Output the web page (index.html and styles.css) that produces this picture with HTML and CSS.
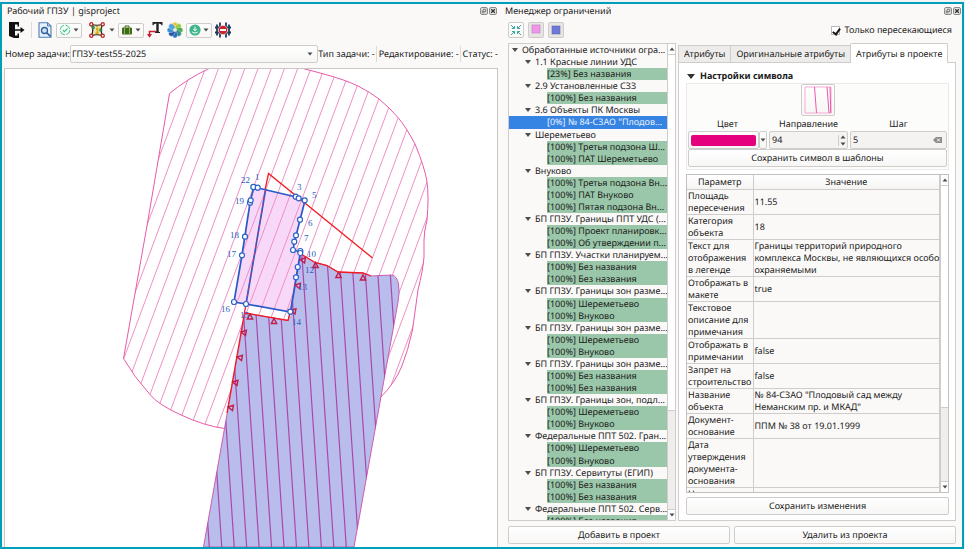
FILE: index.html
```html
<!DOCTYPE html>
<html lang="ru">
<head>
<meta charset="utf-8">
<title>Рабочий ГПЗУ | gisproject</title>
<link rel="stylesheet" href="styles.css">
</head>
<body>
<svg class="defs" aria-hidden="true">
  <symbol id="float" viewBox="0 0 8 8"><rect x=".5" y=".5" width="7" height="7" rx="1.5" fill="#e4e3e2" stroke="#8a8a8a"/><path d="M3.3 2.2h2.5v2.5h-2.5zM2.2 3.5v2.3h2.3" fill="none" stroke="#555" stroke-width=".7"/></symbol>
  <symbol id="close" viewBox="0 0 8 8"><rect x=".5" y=".5" width="7" height="7" rx="1.5" fill="#e4e3e2" stroke="#8a8a8a"/><path d="M2.2 2.2l3.6 3.6M5.8 2.2l-3.6 3.6" stroke="#333" stroke-width="1.3"/></symbol>
  <symbol id="down" viewBox="0 0 6 4"><path d="M.5.5h5L3 3.5z" fill="#4c4c4c"/></symbol>
  <symbol id="up" viewBox="0 0 6 4"><path d="M.5 3.5h5L3 .5z" fill="#4c4c4c"/></symbol>
</svg>
<main class="window">
  <section class="dock work">
    <header class="title"><h1>Рабочий ГПЗУ | gisproject</h1><button aria-label="Открепить"><svg><use href="#float"/></svg></button><button aria-label="Закрыть"><svg><use href="#close"/></svg></button></header>
    <div class="toolbar">
      <button class="tool" aria-label="Выход"><svg viewBox="0 0 16 16"><path d="M0 0h10v4.500H8.500V2.500H6v11h2.500v-2H10V16H5L0 14z" fill="#111"/><path d="M6 7.200h5.500V5L15.500 8l-4 3V8.800H6z" fill="#111"/></svg></button>
      <i class="sep"></i>
      <button class="tool" aria-label="Просмотр"><svg viewBox="0 0 16 16"><path d="M2 .7h8.500L14 4v11.300H2z" fill="#e8f1fb" stroke="#4b7fb5" stroke-width="1.100"/><path d="M10.500.7V4H14" fill="none" stroke="#4b7fb5"/><circle cx="7.500" cy="8.500" r="3" fill="#cfe1f5" stroke="#335f99" stroke-width="1.300"/><path d="M9.600 10.700l4 3.800" stroke="#335f99" stroke-width="1.700"/></svg></button>
      <button class="combo-tool" aria-label="Проверка"><svg viewBox="0 0 12 12"><circle cx="6" cy="6" r="4.800" fill="none" stroke="#3fc98a" stroke-dasharray="6 1.500"/><path d="M3.800 6l1.700 1.700 3-3.200" fill="none" stroke="#3fc98a" stroke-width="1.200"/></svg><svg class="arr"><use href="#down"/></svg></button>
      <button class="tool wide" aria-label="Узлы"><svg viewBox="0 0 16 16"><path d="M2.500 2.500Q8 4 13.500 2.500Q11 8 13.500 13.500Q8 12 2.500 13.500Q5 8 2.500 2.500z" fill="#e9e3ae" stroke="#222" stroke-width="1.200"/><path d="M8 4v1.500M7 7h1.500v4M6.500 11.200h3" stroke="#e4a814" stroke-width="1.800" fill="none"/><g fill="#fff" stroke-width="1.300"><circle cx="2.300" cy="2.300" r="1.600" stroke="#b22"/><circle cx="13.700" cy="2.300" r="1.600" stroke="#b22"/><circle cx="2.300" cy="13.700" r="1.600" stroke="#b22"/><circle cx="13.700" cy="13.700" r="1.600" stroke="#b22"/><circle cx="4.200" cy="5.500" r="1" stroke="#284"/><circle cx="11.800" cy="8" r="1" stroke="#284"/></g></svg><svg class="arr"><use href="#down"/></svg></button>
      <button class="combo-tool" aria-label="Портфель"><svg viewBox="0 0 12 12"><path d="M4 3.500V2h4v1.500" fill="none" stroke="#3e5d15"/><rect x="1" y="3.500" width="10" height="7" rx="1" fill="#3e6b13"/><path d="M3.500 3.500v7M8.500 3.500v7" stroke="#8fb35f"/></svg><svg class="arr"><use href="#down"/></svg></button>
      <button class="tool" aria-label="Подпись"><svg viewBox="0 0 16 16"><path d="M5.500 0h10v3.300h-.9Q14.300 1.400 11.700 1.400v7.800q0 .8 1.300.9v.8H8v-.8q1.300-.1 1.300-.9V1.400Q6.800 1.400 6.400 3.300h-.9z" fill="#222"/><path d="M9 9.500H2.500V14" fill="none" stroke="#c5202c" stroke-width="1.500"/><path d="M0 12h5l-2.500 3.800z" fill="#c5202c"/></svg></button>
      <button class="tool flower" aria-label="Стили"><svg viewBox="0 0 16 16"><g stroke="#fff" stroke-width=".3"><ellipse cx="8" cy="3.500" rx="2.600" ry="3.400" fill="#f0c43a"/><ellipse cx="8" cy="3.500" rx="2.600" ry="3.400" fill="#9cc83e" transform="rotate(45 8 8)"/><ellipse cx="8" cy="3.500" rx="2.600" ry="3.400" fill="#4faa4b" transform="rotate(90 8 8)"/><ellipse cx="8" cy="3.500" rx="2.600" ry="3.400" fill="#2f8f83" transform="rotate(135 8 8)"/><ellipse cx="8" cy="3.500" rx="2.600" ry="3.400" fill="#2c6fc0" transform="rotate(180 8 8)"/><ellipse cx="8" cy="3.500" rx="2.600" ry="3.400" fill="#2756a5" transform="rotate(225 8 8)"/><ellipse cx="8" cy="3.500" rx="2.600" ry="3.400" fill="#3989d4" transform="rotate(270 8 8)"/><ellipse cx="8" cy="3.500" rx="2.600" ry="3.400" fill="#4ea2dd" transform="rotate(315 8 8)"/></g><circle cx="8" cy="8" r="1.800" fill="#e8f1d8"/></svg></button>
      <button class="combo-tool" aria-label="Загрузка"><svg viewBox="0 0 12 12"><circle cx="6" cy="6" r="5.600" fill="#3db58a"/><path d="M6 2.500v4M4.200 5L6 6.800 7.800 5M3.200 7.500q0 1.500 2.800 1.500t2.800-1.500" fill="none" stroke="#fff"/></svg><svg class="arr"><use href="#down"/></svg></button>
      <button class="tool" aria-label="Запрет"><svg viewBox="0 0 16 16"><path d="M2 2.500v11M5 .5v15M11 .5v15M14 2.500v11M0 5.500h16M0 10.500h16" stroke="#1e3c5e" stroke-width="1.800"/><circle cx="8" cy="8" r="4.600" fill="#c9252d" stroke="#f4e6e6" stroke-width=".6"/><rect x="5" y="7" width="6" height="2" fill="#fff"/></svg></button>
    </div>
    <div class="task">
      <label for="task">Номер задачи:</label>
      <span class="select"><select id="task"><option>ГПЗУ-test55-2025</option></select><svg class="arr"><use href="#down"/></svg></span>
      <span>Тип задачи: -</span><i class="sep"></i><span>Редактирование: -</span><i class="sep"></i><span class="status">Статус: -</span>
    </div>
    <div class="map">
      <svg viewBox="5 69 492 478" preserveAspectRatio="xMidYMin slice" role="img" aria-label="Карта участка">
        <defs>
          <path id="zone" d="M169.500 93.500Q187 79 208 69L230 60H270L305 69L322 73.500Q346 80 358 86T379 99Q390 108 398 117.500T415 144Q425 168 427 182T427 220Q424 232 424 240V257Q423 270 418 290L412.500 330Q408 351 401.500 367T380 398L330 410L224.500 428.500Q205 426 181 415T150 394.500Q134 377 123.500 358.500L148 220z"/>
          <path id="area" d="M300.500 254L315 262.500L327 265.500L338 272L363 273L371 276L392 275Q397 276 398.500 284T398 302L354 547H203.500L224.500 428.500L245 313L288 320.500L290.500 311.500L296 277z"/>
          <clipPath id="zclip"><use href="#zone"/></clipPath>
          <clipPath id="aclip"><use href="#area"/></clipPath>
          <path id="tri" d="M-2.700 2.500h5.400L0-2.500z"/>
        </defs>
        <path fill="#f8d8f8" d="M254 187L305 200L293 250L300 253L290 312L234 302z"/>
        <g clip-path="url(#zclip)"><path fill="none" stroke="#ee91c3" d="M178.700 69l-134.300 361m147.500-361l-134.300 361m147.500-361l-134.300 361m147.500-361l-134.300 361m147.500-361l-134.300 361m147.500-361l-134.300 361m147.500-361l-134.300 361m147.500-361l-134.300 361m147.500-361l-134.300 361m147.500-361l-134.300 361m147.500-361l-134.300 361m147.500-361l-134.300 361m147.500-361l-134.300 361m147.500-361l-134.300 361m147.500-361l-134.300 361m147.500-361l-134.300 361m147.500-361l-134.300 361m147.500-361l-134.300 361m147.500-361l-134.300 361m147.500-361l-134.300 361m147.500-361l-134.300 361m147.500-361l-134.300 361m147.500-361l-134.300 361m147.500-361l-134.300 361m147.500-361l-134.300 361m147.500-361l-134.300 361m147.500-361l-134.300 361m147.500-361l-134.300 361"/></g>
        <use href="#zone" fill="none" stroke="#e85aa8"/>
        <use href="#area" fill="#b8bdec" stroke="#cf5cae"/>
        <g clip-path="url(#aclip)"><path fill="none" stroke="#ab47aa" stroke-width="1.200" d="M209.300 547l-20-300m32.450 300l-20-300m32.450 300l-20-300m32.450 300l-20-300m32.450 300l-20-300m32.450 300l-20-300m32.450 300l-20-300m32.450 300l-20-300m32.450 300l-20-300m32.450 300l-20-300m32.450 300l-20-300m32.450 300l-20-300m32.450 300l-20-300m32.450 300l-20-300m32.450 300l-20-300m32.450 300l-20-300m32.450 300l-20-300"/></g>
        <path d="M265 190L268.500 173.500L372.500 258M301 254L315 262.500L327 265.500L338 272L363 273L371 276M227 413L246 304M245 313L288 320.500L290.500 311" fill="none" stroke="#f01c22" stroke-width="1.300"/>
        <path d="M254 187L258 188L296 197L305 200.500L300 220L294.500 242L293 250L300.500 252L298 267L290.500 312L246 304L234 302L242 255L250.500 200zM265.500 190L246 304" fill="none" stroke="#2b58c6" stroke-width="1.700"/>
        <path d="M265.500 190L246 304" stroke="#d03868" stroke-dasharray="3 4"/>
        <g fill="none" stroke="#c21c48" stroke-width="1.400">
          <use href="#tri" x="315.500" y="265"/><use href="#tri" x="338.500" y="275"/><use href="#tri" x="363" y="277.500"/><use href="#tri" x="250" y="316.500"/><use href="#tri" x="274" y="321"/>
          <use href="#tri" transform="translate(302.500 260) rotate(-80)"/><use href="#tri" transform="translate(297.500 285.500) rotate(-80)"/><use href="#tri" transform="translate(293 311) rotate(-80)"/><use href="#tri" transform="translate(243.500 332.500) rotate(-80)"/><use href="#tri" transform="translate(239.500 357.500) rotate(-80)"/><use href="#tri" transform="translate(235 382.500) rotate(-80)"/><use href="#tri" transform="translate(230.500 407.500) rotate(-80)"/>
        </g>
        <g fill="#fff" stroke="#2b62c8" stroke-width="1.200">
          <circle cx="253.500" cy="187" r="2.700"/><circle cx="257.700" cy="187.700" r="2.500"/><circle cx="295.700" cy="196.700" r="2.500"/><circle cx="298.700" cy="198.300" r="2.500"/><circle cx="304.700" cy="200.300" r="2.500"/><circle cx="300" cy="219.700" r="2.500"/><circle cx="296" cy="235.300" r="2.500"/><circle cx="294.300" cy="241.700" r="2.500"/><circle cx="293" cy="250" r="2.500"/><circle cx="300.300" cy="251" r="2.500"/><circle cx="300.300" cy="253" r="2.500"/><circle cx="297.700" cy="267" r="2.500"/><circle cx="296" cy="277.300" r="2.500"/><circle cx="290.300" cy="311.700" r="2.500"/><circle cx="246" cy="304" r="2.500"/><circle cx="234" cy="302" r="2.500"/><circle cx="242" cy="255.300" r="2.500"/><circle cx="245" cy="236.700" r="2.500"/><circle cx="250" cy="202.700" r="2.500"/><circle cx="250.700" cy="200.300" r="2.500"/>
        </g>
        <g class="points"><text x="241" y="183">22</text><text x="255" y="180">1</text><text x="297" y="190">3</text><text x="312" y="198">5</text><text x="308" y="226">6</text><text x="304" y="241">7</text><text x="307" y="257">10</text><text x="305" y="273">12</text><text x="298" y="290">13</text><text x="292" y="325">14</text><text x="240" y="318">15</text><text x="221" y="312">16</text><text x="227" y="257">17</text><text x="230" y="238">18</text><text x="235" y="204">19</text></g>
      </svg>
    </div>
  </section>
  <div class="splitter"></div>
  <section class="dock manager">
    <header class="title"><h2>Менеджер ограничений</h2><button aria-label="Открепить"><svg><use href="#float"/></svg></button><button aria-label="Закрыть"><svg><use href="#close"/></svg></button></header>
    <div class="bar">
      <button class="sq" aria-label="Свернуть"><svg viewBox="0 0 12 12"><path d="M1 1l3.500 3.500M2 4.500h2.500V2M11 1L7.500 4.500M10 4.500H7.500V2M1 11l3.500-3.500M2 7.500h2.500V10M11 11L7.500 7.500M10 7.500H7.500V10" fill="none" stroke="#3aa79c"/></svg></button>
      <button class="sq on" aria-label="Розовые"><svg viewBox="0 0 12 12"><rect x="2" y="1" width="8" height="8" fill="#ee96ea" stroke="#c07cbc" stroke-width=".6"/></svg></button>
      <button class="sq on" aria-label="Синие"><svg viewBox="0 0 12 12"><rect x="2" y="2" width="8" height="8" fill="#6e78d6" stroke="#6068b0" stroke-width=".6"/></svg></button>
      <label class="check"><input type="checkbox" checked>Только пересекающиеся</label>
    </div>
    <div class="panes">
      <div class="tree">
        <ul>
          <li class="root">Обработанные источники огра...</li>
          <li class="group">1.1 Красные линии УДС</li>
          <li class="leaf"><span>[23%] Без названия</span></li>
          <li class="group">2.9 Установленные СЗЗ</li>
          <li class="leaf"><span>[100%] Без названия</span></li>
          <li class="group">3.6 Объекты ПК Москвы</li>
          <li class="leaf selected"><span>[0%] № 84-СЗАО "Плодов...</span></li>
          <li class="group">Шереметьево</li>
          <li class="leaf"><span>[100%] Третья подзона Ш...</span></li>
          <li class="leaf"><span>[100%] ПАТ Шереметьево</span></li>
          <li class="group">Внуково</li>
          <li class="leaf"><span>[100%] Третья подзона Вн...</span></li>
          <li class="leaf"><span>[100%] ПАТ Внуково</span></li>
          <li class="leaf"><span>[100%] Пятая подзона Вн...</span></li>
          <li class="group">БП ГПЗУ. Границы ППТ УДС (...</li>
          <li class="leaf"><span>[100%] Проект планировк...</span></li>
          <li class="leaf"><span>[100%] Об утверждении п...</span></li>
          <li class="group">БП ГПЗУ. Участки планируем...</li>
          <li class="leaf"><span>[100%] Без названия</span></li>
          <li class="leaf"><span>[100%] Без названия</span></li>
          <li class="group">БП ГПЗУ. Границы зон разме...</li>
          <li class="leaf"><span>[100%] Шереметьево</span></li>
          <li class="leaf"><span>[100%] Внуково</span></li>
          <li class="group">БП ГПЗУ. Границы зон разме...</li>
          <li class="leaf"><span>[100%] Шереметьево</span></li>
          <li class="leaf"><span>[100%] Внуково</span></li>
          <li class="group">БП ГПЗУ. Границы зон разме...</li>
          <li class="leaf"><span>[100%] Без названия</span></li>
          <li class="leaf"><span>[100%] Без названия</span></li>
          <li class="group">БП ГПЗУ. Границы зон, подл...</li>
          <li class="leaf"><span>[100%] Шереметьево</span></li>
          <li class="leaf"><span>[100%] Внуково</span></li>
          <li class="group">Федеральные ППТ 502. Гран...</li>
          <li class="leaf"><span>[100%] Шереметьево</span></li>
          <li class="leaf"><span>[100%] Внуково</span></li>
          <li class="group">БП ГПЗУ. Сервитуты (ЕГИП)</li>
          <li class="leaf"><span>[100%] Без названия</span></li>
          <li class="leaf"><span>[100%] Без названия</span></li>
          <li class="group">Федеральные ППТ 502. Серв...</li>
          <li class="leaf"><span>[100%] Без названия</span></li>
        </ul>
        <div class="scroll tree-scroll"><svg><use href="#up"/></svg><i class="thumb"></i><i class="track"></i><svg><use href="#down"/></svg></div>
      </div>
      <div class="tabs">
        <nav class="tablist"><button>Атрибуты</button><button>Оригинальные атрибуты</button><button class="active">Атрибуты в проекте</button></nav>
        <div class="panel">
          <h3>Настройки символа</h3>
          <div class="symbol">
            <button class="preview" aria-label="Символ"><svg viewBox="0 0 28 28"><path d="M1 1h26v26H1z" fill="none" stroke="#f5a9d2"/><path d="M10.500 1l2 26M23 1l2 26M26 1l.8 26" fill="none" stroke="#e95aab"/></svg></button>
            <div class="fields">
              <label for="color">Цвет</label><label for="dir">Направление</label><label for="step">Шаг</label>
              <div class="color"><button id="color" aria-label="Цвет"><i></i></button><button aria-label="Выбор цвета"><svg class="arr"><use href="#down"/></svg></button></div>
              <div class="field"><input id="dir" value="94"><span class="spin"><svg class="arr"><use href="#up"/></svg><svg class="arr"><use href="#down"/></svg></span></div>
              <div class="field"><input id="step" value="5"><svg class="clear" viewBox="0 0 9 6"><path d="M3 0h6v6H3L0 3z" fill="#8b8b8b"/><path d="M4 1.500l3 3M7 1.500l-3 3" stroke="#fff"/></svg></div>
            </div>
            <button class="btn">Сохранить символ в шаблоны</button>
          </div>
          <div class="tablebox">
            <div class="clip">
              <table>
                <colgroup><col class="c1"><col></colgroup>
                <thead><tr><th>Параметр</th><th>Значение</th></tr></thead>
                <tbody>
                  <tr><td>Площадь<br>пересечения</td><td>11.55</td></tr>
                  <tr><td>Категория<br>объекта</td><td>18</td></tr>
                  <tr><td>Текст для<br>отображения<br>в легенде</td><td>Границы территорий природного<br>комплекса Москвы, не являющихся особо<br>охраняемыми</td></tr>
                  <tr><td>Отображать в<br>макете</td><td>true</td></tr>
                  <tr><td>Текстовое<br>описание для<br>примечания</td><td></td></tr>
                  <tr><td>Отображать в<br>примечании</td><td>false</td></tr>
                  <tr><td>Запрет на<br>строительство</td><td>false</td></tr>
                  <tr><td>Название<br>объекта</td><td>№ 84-СЗАО "Плодовый сад между<br>Неманским пр. и МКАД"</td></tr>
                  <tr><td>Документ-<br>основание</td><td>ППМ № 38 от 19.01.1999</td></tr>
                  <tr><td>Дата<br>утверждения<br>документа-<br>основания</td><td></td></tr>
                  <tr><td>Номер</td><td></td></tr>
                </tbody>
              </table>
            </div>
            <div class="scroll table-scroll"><svg><use href="#up"/></svg><i class="thumb"></i><i class="track"></i><svg><use href="#down"/></svg></div>
          </div>
          <button class="btn">Сохранить изменения</button>
        </div>
      </div>
    </div>
    <footer><button class="btn">Добавить в проект</button><button class="btn">Удалить из проекта</button></footer>
  </section>
</main>
</body>
</html>
```
FILE: styles.css
```css
* { box-sizing: border-box; }
body {
  margin: 0;
  padding: 2px 1px 0 0;
  height: 100vh;
  background: #f1f3f4;
  color: #1a1a1a;
  font: 9px/12px "Noto Sans", sans-serif;
  text-rendering: geometricPrecision;
}
button, input, select { font: inherit; color: inherit; text-rendering: inherit; margin: 0; padding: 0; border: 0; background: none; }
h1, h2, h3, ul { margin: 0; padding: 0; font-size: 9px; font-weight: 400; list-style: none; }
svg { display: block; }
.defs { position: absolute; width: 0; height: 0; }
.arr { width: 6px; height: 4px; flex: none; }

.window {
  display: flex;
  height: 100%;
  border: 2px solid #009fb9;
  background: #faf9f8;
}
.dock { display: flex; flex-direction: column; min-width: 0; min-height: 0; }
.work { flex: 496 0 0; }
.splitter { width: 7px; flex: none; }
.manager { flex: 448 0 0; padding: 0 6px 3px 3px; }

.title { display: flex; gap: 1px; align-items: center; height: 13px; flex: none; }
.title h1, .title h2 { flex: 1; }
.title h1 { padding-left: 5px; }
.title button svg { width: 8px; height: 8px; }
.work .title { padding-right: 1px; }
.manager .title { margin: 0 -5px 0 -3px; }

.toolbar { display: flex; align-items: center; height: 26px; padding-left: 7px; gap: 3px; flex: none; }
.toolbar .sep { margin: 0 2px 0 3px; }
.tool { display: flex; align-items: center; gap: 4px; height: 16px; }
.tool svg:first-child { width: 16px; height: 16px; }
.wide { margin-left: 4px; }
.flower { margin-left: 1px; }
.sep { width: 1px; height: 16px; background: #dddcdb; }
.combo-tool, .btn, .sq, .preview, .select, .color button {
  border: 1px solid #cfcdcb;
  border-radius: 2px;
  background: linear-gradient(#fff, #f7f6f5);
}
.combo-tool { display: flex; align-items: center; justify-content: space-between; width: 26px; height: 15px; padding: 0 2px; }
.combo-tool svg:first-child { width: 12px; height: 12px; }

.task { display: flex; align-items: center; height: 18px; margin-top: 2px; padding: 0 0 0 3px; white-space: nowrap; flex: none; }
.task .sep { margin: 0 2px 0 1px; }
.select { position: relative; flex: 1; height: 18px; }
.select select { display: block; width: 100%; height: 16px; padding-left: 1px; appearance: none; }
.select .arr { position: absolute; right: 4px; top: 6px; }

.map { flex: 1; min-height: 0; margin: 5px 0 0 2px; border: solid #c9c7c5; border-width: 1px 1px 0; background: #fff; }
.map svg { width: 100%; height: 100%; }
.points { font: 9px "Liberation Serif", serif; fill: #2e61bd; }

.bar { display: flex; align-items: center; gap: 4px; height: 26px; flex: none; }
.sq { width: 16px; height: 16px; padding: 1px; }
.sq.on { background: #e7e5e4; }
.sq svg { width: 12px; height: 12px; }
.check { display: flex; align-items: center; gap: 4px; margin-left: auto; padding-right: 4px; }
.check input { position: relative; appearance: none; width: 9px; height: 9px; border: 1px solid #bcbab8; background: #fff; }
.check input:checked::after {
  content: "";
  position: absolute;
  left: 2px;
  top: 0;
  width: 3px;
  height: 6px;
  border: solid #1a1a1a;
  border-width: 0 2px 2px 0;
  transform: rotate(35deg);
}

.panes { display: flex; gap: 2px; flex: 1; min-height: 0; }
.tree { display: flex; flex: 166 0 0; min-width: 0; border: 1px solid #cfcdcb; overflow: hidden; }
.tree ul { display: grid; grid-auto-rows: 1fr; flex: 1; min-width: 0; height: calc(100% + 7px); }
.tree li { position: relative; min-height: 0; white-space: nowrap; overflow: hidden; }
.root { padding-left: 13px; }
.group { padding-left: 26px; }
.leaf { padding-left: 38px; }
.leaf span { display: block; height: 100%; background: #9ac7a9; overflow: hidden; }
.leaf.selected, .leaf.selected span { background: #3584e4; color: #e8f1fc; }
.root::before, .group::before {
  content: "";
  position: absolute;
  top: 4px;
  left: 3px;
  border: 3px solid transparent;
  border-top: 4px solid #4c4c4c;
  border-bottom: 0;
}
.group::before { left: 16px; }

.scroll { display: flex; flex-direction: column; align-items: center; width: 8px; flex: none; border-left: 1px solid #cfcdcb; background: #fff; }
.scroll svg { width: 6px; height: 4px; margin: 3px 0; flex: none; }
.scroll i { width: 100%; border-top: 1px solid #cfcdcb; }
.track { flex: 100; background: #efeeed; }
.scroll .track { border-bottom: 1px solid #cfcdcb; }
.tree-scroll .thumb { flex: 360; }
.table-scroll .thumb { flex: 300; }

.tabs { display: flex; flex-direction: column; flex: 278 0 0; min-width: 0; }
.tablist { display: flex; align-items: flex-end; height: 19px; flex: none; }
.tablist button { height: 17px; padding: 0 5px; border: 1px solid #cfcdcb; border-width: 1px 0 0 1px; background: #edecea; white-space: nowrap; }
.tablist .active { position: relative; height: 20px; margin-bottom: -1px; border-right-width: 1px; border-radius: 2px 2px 0 0; background: #fff; }
.panel { display: flex; flex-direction: column; flex: 1; min-height: 0; padding: 7px 6px 5px 7px; border: 1px solid #cfcdcb; background: #fff; }
.panel h3 { position: relative; padding-left: 14px; font-weight: 700; }
.panel h3::before { content: ""; position: absolute; left: 1px; top: 4px; border: 4px solid transparent; border-top: 5px solid #333; border-bottom: 0; }
.symbol { display: flex; flex-direction: column; margin-top: 1px; padding: 0 1px 2px; border: 1px solid #ebeae9; background: #fcfcfb; }
.preview { align-self: center; width: 34px; height: 32px; padding: 1px; }
.preview svg { width: 30px; height: 28px; }
.fields { display: grid; grid-template-columns: 79px 79px minmax(0, 1fr); gap: 1px 2px; margin-top: 2px; }
.fields label { text-align: center; }
.color { display: flex; height: 18px; }
.color button { display: grid; place-items: center; width: 8px; }
.color button:first-child { flex: 1; padding: 2px; }
.color i { width: 100%; height: 11px; border-radius: 2px; background: #e5007e; }
.field { display: flex; align-items: center; min-width: 0; height: 18px; padding-left: 2px; border: 1px solid #cfcdcb; border-radius: 2px; background: #f4f3f2; }
.field input { flex: 1; min-width: 0; }
.spin { display: grid; gap: 3px; padding: 0 1px; border-left: 1px solid #cfcdcb; }
.clear { width: 9px; height: 6px; margin-right: 4px; flex: none; }
.btn { height: 18px; flex: none; }
.symbol .btn { height: 18px; }

.tablebox { display: flex; flex: 1; min-height: 0; margin: 4px 0; border: 1px solid #c2c0be; }
.clip { flex: 1; overflow: hidden; }
table { width: 100%; table-layout: fixed; border-collapse: collapse; background: #faf9f8; white-space: nowrap; }
.c1 { width: 66px; }
th, td { padding: 0 1px; border-right: 1px solid #cfcdcb; border-bottom: 1px solid #cfcdcb; }
th { height: 14px; font-weight: 400; background: linear-gradient(#fff, #f5f4f3); }
td { text-align: left; vertical-align: middle; }

footer { display: flex; gap: 4px; margin-top: 5px; flex: none; }
footer .btn { flex: 1; }
```
